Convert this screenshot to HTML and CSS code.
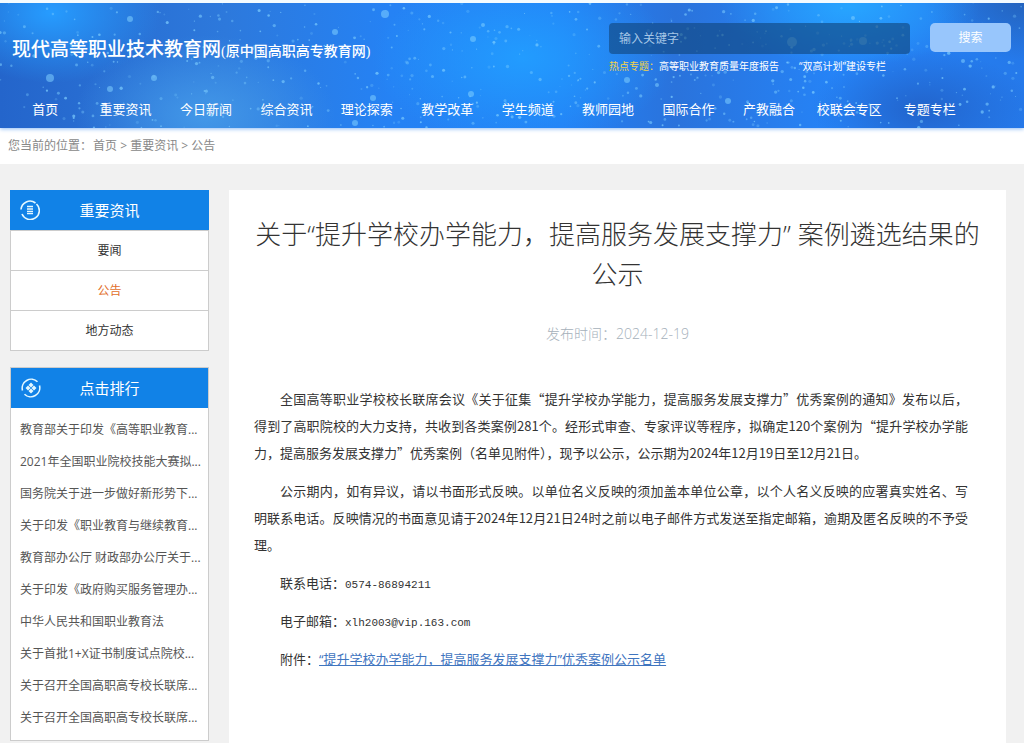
FILE: index.html
```html
<!DOCTYPE html>
<html lang="zh-CN">
<head>
<meta charset="utf-8">
<meta name="viewport" content="width=device-width, initial-scale=1">
<title>现代高等职业技术教育网</title>
<link rel="stylesheet" href="styles.css">
</head>
<body>
<header class="banner">
  <svg class="stars" id="stars" aria-hidden="true" viewBox="0 0 1024 125" preserveAspectRatio="xMidYMid slice"></svg>
  <div class="masthead">
    <a class="logo" href="#">现代高等职业技术教育网<small class="logo-note">(原中国高职高专教育网)</small></a>
    <div class="search-area">
      <form class="search">
        <input class="search-input" type="text" placeholder="输入关键字" aria-label="输入关键字">
        <button class="search-button" type="button">搜索</button>
      </form>
      <div class="hot">
        <span class="hot-label">热点专题：</span>
        <a href="#">高等职业教育质量年度报告</a>
        <a class="hot-next" href="#">“双高计划”建设专栏</a>
      </div>
    </div>
  </div>
  <nav class="nav">
    <a href="#">首页</a><a href="#">重要资讯</a><a href="#">今日新闻</a><a href="#">综合资讯</a><a href="#">理论探索</a><a href="#">教学改革</a><a href="#">学生频道</a><a href="#">教师园地</a><a href="#">国际合作</a><a href="#">产教融合</a><a href="#">校联会专区</a><a href="#">专题专栏</a>
  </nav>
</header>
<div class="crumbs"><span class="crumbs-label">您当前的位置：</span><a href="#">首页</a> &gt; <a href="#">重要资讯</a> &gt; <a href="#">公告</a></div>
<main class="page">
  <aside class="side">
    <section class="menu">
      <h2 class="side-title">
        <svg class="side-icon" viewBox="0 0 20 20" aria-hidden="true"><path d="M1 9.500A9 9 0 0 1 15.500 3M16.500 4A9 9 0 1 1 2 14"/><path class="thin" d="M7 6.500h6M7 9h6M7 11.300h6M7 13.500h6"/></svg>
        重要资讯
      </h2>
      <a class="menu-item" href="#">要闻</a>
      <a class="menu-item current" href="#">公告</a>
      <a class="menu-item" href="#">地方动态</a>
    </section>
    <section class="rank">
      <h2 class="side-title">
        <svg class="side-icon" viewBox="0 0 20 20" aria-hidden="true"><path d="M1.500 12.500A9 9 0 0 1 16.500 3.800M18.500 7.500A9 9 0 0 1 3.500 16.200"/><path class="solid" d="M10 4.500l2.500 2.500L10 9.500 7.500 7zM10 10.500l2.500 2.500-2.500 2.500-2.500-2.500zM7 7.500L9.500 10 7 12.500 4.500 10zM13 7.500l2.500 2.500-2.500 2.500-2.500-2.500z"/></svg>
        点击排行
      </h2>
      <ul class="rank-list">
        <li><a href="#">教育部关于印发《高等职业教育...</a></li>
        <li><a href="#">2021年全国职业院校技能大赛拟...</a></li>
        <li><a href="#">国务院关于进一步做好新形势下...</a></li>
        <li><a href="#">关于印发《职业教育与继续教育...</a></li>
        <li><a href="#">教育部办公厅 财政部办公厅关于...</a></li>
        <li><a href="#">关于印发《政府购买服务管理办...</a></li>
        <li><a href="#">中华人民共和国职业教育法</a></li>
        <li><a href="#">关于首批1+X证书制度试点院校...</a></li>
        <li><a href="#">关于召开全国高职高专校长联席...</a></li>
        <li><a href="#">关于召开全国高职高专校长联席...</a></li>
      </ul>
    </section>
  </aside>
  <article class="article">
    <h1 class="title">关于“提升学校办学能力，提高服务发展支撑力” 案例遴选结果的公示</h1>
    <p class="date">发布时间：2024-12-19</p>
    <div class="text">
      <p>全国高等职业学校校长联席会议《关于征集“提升学校办学能力，提高服务发展支撑力”优秀案例的通知》发布以后，得到了高职院校的大力支持，共收到各类案例281个。经形式审查、专家评议等程序，拟确定120个案例为“提升学校办学能力，提高服务发展支撑力”优秀案例（名单见附件），现予以公示，公示期为2024年12月19日至12月21日。</p>
      <p>公示期内，如有异议，请以书面形式反映。以单位名义反映的须加盖本单位公章，以个人名义反映的应署真实姓名、写明联系电话。反映情况的书面意见请于2024年12月21日24时之前以电子邮件方式发送至指定邮箱，逾期及匿名反映的不予受理。</p>
      <p>联系电话：<span class="mono">0574-86894211</span></p>
      <p>电子邮箱：<span class="mono">xlh2003@vip.163.com</span></p>
      <p>附件：<a class="attachment" href="#">“提升学校办学能力，提高服务发展支撑力”优秀案例公示名单</a></p>
    </div>
  </article>
</main>
<script src="stars.js"></script>
</body>
</html>
```

FILE: styles.css
```css
* { box-sizing: border-box; }
body {
  margin: 0;
  min-height: 100vh;
  display: flex;
  flex-direction: column;
  background: #f1f1f1;
  color: #333;
  font: 12px/20px "Open Sans", "Noto Sans CJK SC", sans-serif;
}
a { color: inherit; text-decoration: none; }

.banner {
  position: relative;
  border-top: 3px solid #f4fbff;
  color: #fff;
  background:
    radial-gradient(ellipse 110px 70px at 5% 10%, #269cff 0%, #269cff00 100%),
    radial-gradient(ellipse 130px 80px at 20% 90%, #4398e8 0%, #4398e800 100%),
    radial-gradient(ellipse 150px 90px at 51% 45%, #229cff 0%, #229cff00 100%),
    radial-gradient(ellipse 130px 60px at 83% 5%, #27a5ff 0%, #27a5ff00 100%),
    radial-gradient(ellipse 100px 60px at 100% 0%, #2463bd 0%, #2463bd00 100%),
    radial-gradient(ellipse 110px 60px at 90% 85%, #2264cc 0%, #2264cc00 100%),
    linear-gradient(90deg, #2465cb 0%, #2d79dc 22%, #2582f4 38%, #2380f5 55%, #2a73dc 66%, #2584f8 82%, #2579ea 100%);
  background-origin: border-box;
  background-clip: padding-box;
  box-shadow: 0 1px 4px #8fbcf5;
}
.stars { position: absolute; inset: 0; width: 100%; height: 100%; fill: #80d0ff; }
.masthead {
  position: relative;
  display: flex;
  justify-content: space-between;
  align-items: flex-start;
  padding: 20px 13px 0 12px;
}
.logo {
  padding-top: 12px;
  font: 500 19px/30px "Liberation Serif", "Noto Sans CJK SC", serif;
  white-space: nowrap;
}
.logo-note { font-size: 14px; }
.search-area { width: 402px; }
.search { display: flex; align-items: flex-start; gap: 20px; }
.search-input {
  flex: 1;
  min-width: 0;
  height: 31px;
  padding: 0 10px;
  border: 0;
  border-radius: 4px;
  background: rgba(16, 70, 125, .62);
  color: #fff;
  font: inherit;
}
.search-input::placeholder { color: #a5c6e6; opacity: 1; }
.search-button {
  width: 81px;
  height: 29px;
  padding: 0;
  border: 0;
  border-radius: 5px;
  background: #98c6fc;
  color: #fff;
  font: inherit;
}
.hot { display: flex; font-size: 10px; line-height: 24px; white-space: nowrap; }
.hot-label { color: #f3d34a; }
.hot-next { margin-left: 20px; }
.nav {
  position: relative;
  display: grid;
  grid-template-columns: repeat(12, 1fr);
  padding: 12px 54px 0 5px;
  font-size: 13px;
  line-height: 38px;
  text-align: center;
  white-space: nowrap;
}

.crumbs {
  padding: 0 8px;
  background: #fff;
  color: #888;
  line-height: 36px;
}
.crumbs-label { margin-right: 1px; }

.page { flex: 1; display: flex; gap: 20px; padding: 26px 18px 0 10px; }
.side { width: 199px; flex: none; padding-bottom: 2px; }
.side-title {
  display: grid;
  grid-template-columns: 20px 1fr 20px;
  align-items: center;
  margin: 0;
  padding: 0 10px;
  height: 40px;
  background: #1182e7;
  color: #fff;
  font-size: 15px;
  font-weight: 400;
  text-align: center;
}
.side-icon { width: 20px; height: 20px; fill: none; stroke: #e4f8ff; stroke-width: 1.600; }
.side-icon .thin { stroke-width: 1.300; }
.side-icon .solid { fill: #e4f8ff; stroke: none; }
.menu-item {
  display: block;
  border: 1px solid #ccc;
  border-top: 0;
  background: #fff;
  line-height: 39px;
  text-align: center;
}
.menu .side-title { border-bottom: 1px solid #ccc; height: 41px; }
.current { color: #e2702c; }
.rank { margin-top: 16px; border: 1px solid #ccc; background: #fff; }
.rank-list {
  margin: 0;
  padding: 6px 9px;
  list-style: none;
  line-height: 32px;
  color: #555;
  white-space: nowrap;
}

.article { flex: 1; padding: 24px 24px 40px; background: #fff; }
.title {
  margin: 0;
  font-size: 26px;
  font-weight: 300;
  line-height: 40px;
  text-align: center;
}
.date {
  margin: 29px 0 40px;
  color: #a5b0ba;
  font-size: 14px;
  font-weight: 300;
  line-height: 22px;
  text-align: center;
}
.text {
  padding: 0 14px 0 1px;
  font: 13px/27px "Noto Sans CJK SC", sans-serif;
  text-align: justify;
}
.text p { margin: 0 0 11px; text-indent: 2em; }
.mono { font-family: "Liberation Mono", monospace; font-size: 11px; line-height: 1; }
.attachment {
  color: #3f75bf;
  font-family: "Open Sans", "Noto Sans CJK SC", sans-serif;
  line-height: 1;
  text-decoration: underline;
}
```

FILE: stars.js
```js
// Scatters a repeatable star field over the banner.
(function () {
  var svg = document.getElementById('stars');
  var seed = 17;
  function next() {
    seed = (seed * 16807) % 2147483647;
    return seed / 2147483647;
  }
  function star(x, y, r, opacity) {
    var c = document.createElementNS('http://www.w3.org/2000/svg', 'circle');
    c.setAttribute('cx', x);
    c.setAttribute('cy', y);
    c.setAttribute('r', r);
    c.setAttribute('opacity', opacity);
    svg.appendChild(c);
  }
  for (var i = 0; i < 620; i++) {
    star(next() * 1024, next() * 125, 0.5 + next() * 1.2, 0.2 + next() * 0.5);
  }
  [[50, 75, 4], [130, 16, 3], [110, 86, 3], [154, 75, 3], [385, 11, 4], [335, 29, 3],
   [373, 95, 3], [473, 36, 3], [483, 22, 2], [471, 91, 3], [627, 77, 3], [657, 82, 2],
   [792, 39, 5], [863, 38, 4], [853, 15, 2], [963, 58, 2], [728, 98, 3], [355, 120, 3]
  ].forEach(function (s) { star(s[0], s[1], s[2], 0.55); });
})();
```
